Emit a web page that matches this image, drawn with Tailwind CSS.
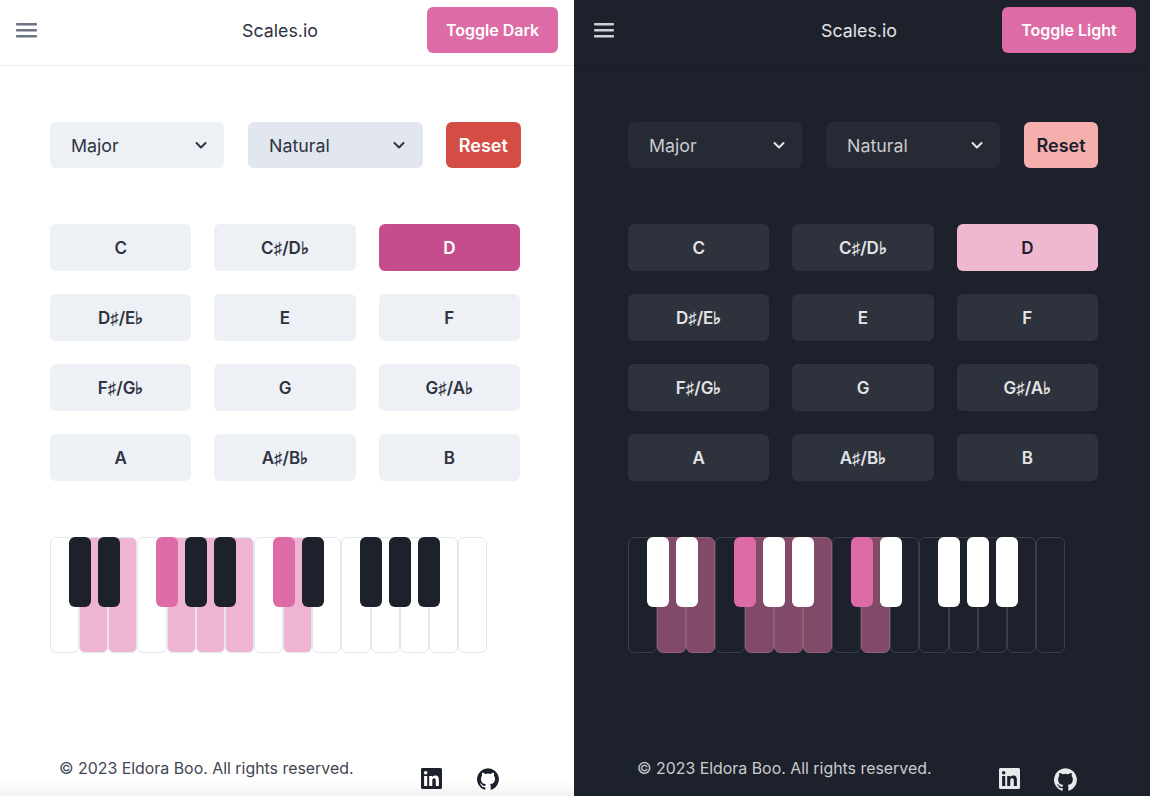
<!DOCTYPE html>
<html lang="en">
<head>
<meta charset="utf-8">
<title>Scales.io</title>
<script src="https://cdn.jsdelivr.net/npm/@tailwindcss/browser@4"></script>
</head>
<body class="m-0 overflow-hidden font-['Inter',sans-serif]">
<div class="flex h-[796px] w-[1150px]">

<!-- LIGHT -->
<section class="relative flex h-full w-[574px] shrink-0 flex-col bg-white text-[#2d3340]">
  <div class="absolute right-0 bottom-0 left-0 h-[16px] bg-gradient-to-b from-white to-[#f2f2f2]"></div>
  <header class="flex h-[66px] items-center border-b border-[#e9eef4] pr-4 pl-4">
    <svg class="mt-[-5px] h-[15px] w-[21px] shrink-0" viewBox="0 0 21 15" fill="#6b7484"><rect y="0" width="21" height="2.5" rx=".8"/><rect y="6" width="21" height="2.5" rx=".8"/><rect y="12" width="21" height="2.5" rx=".8"/></svg>
    <span class="mt-[-4px] ml-[205px] text-[17.8px] leading-[24px]">Scales.io</span>
    <button class="mt-[-6px] ml-auto h-[46px] w-[131px] rounded-md bg-[#dd6ba5] text-[16px] font-semibold text-white">Toggle Dark</button>
  </header>
  <div class="mt-[56px] flex pl-[50px]">
    <div class="flex h-[46px] w-[174px] items-center justify-between rounded-md bg-[#edf0f5] pr-[17px] pl-[21px] text-[17.8px]"><span class="mt-[2px]">Major</span><svg class="h-[10px] w-3" viewBox="0 0 12 10" fill="none" stroke="#2d3340" stroke-width="2" stroke-linecap="round" stroke-linejoin="round"><path d="M1.5 3 6 7.5 10.5 3"/></svg></div>
    <div class="ml-[24px] flex h-[46px] w-[175px] items-center justify-between rounded-md bg-[#e2e6ee] pr-[18px] pl-[21px] text-[17.8px]"><span class="mt-[2px]">Natural</span><svg class="h-[10px] w-3" viewBox="0 0 12 10" fill="none" stroke="#2d3340" stroke-width="2" stroke-linecap="round" stroke-linejoin="round"><path d="M1.5 3 6 7.5 10.5 3"/></svg></div>
    <button class="ml-[23px] h-[46px] w-[74.5px] rounded-md bg-[#d44d45] text-[18px] font-semibold text-white">Reset</button>
  </div>
  <div class="mt-[56px] grid w-[520px] grid-cols-3 gap-x-[23px] gap-y-[23px] pl-[50px] text-[17px] font-semibold">
    <button class="h-[47px] rounded-md bg-[#edf0f5] pt-[2px]">C</button>
    <button class="h-[47px] rounded-md bg-[#edf0f5] pt-[2px]">C♯/D♭</button>
    <button class="h-[47px] rounded-md bg-[#c64d8b] pt-[2px] text-white">D</button>
    <button class="h-[47px] rounded-md bg-[#edf0f5] pt-[2px]">D♯/E♭</button>
    <button class="h-[47px] rounded-md bg-[#edf0f5] pt-[2px]">E</button>
    <button class="h-[47px] rounded-md bg-[#edf0f5] pt-[2px]">F</button>
    <button class="h-[47px] rounded-md bg-[#edf0f5] pt-[2px]">F♯/G♭</button>
    <button class="h-[47px] rounded-md bg-[#edf0f5] pt-[2px]">G</button>
    <button class="h-[47px] rounded-md bg-[#edf0f5] pt-[2px]">G♯/A♭</button>
    <button class="h-[47px] rounded-md bg-[#edf0f5] pt-[2px]">A</button>
    <button class="h-[47px] rounded-md bg-[#edf0f5] pt-[2px]">A♯/B♭</button>
    <button class="h-[47px] rounded-md bg-[#edf0f5] pt-[2px]">B</button>
  </div>
  <div class="relative mt-[56px] ml-[50px] flex h-[116px] w-[437px]">
    <div class="flex-1 rounded-md border border-[#e2e6ee] bg-white"></div>
    <div class="flex-1 rounded-md border border-[#e2e6ee] bg-[#efb4d1]"></div>
    <div class="flex-1 rounded-md border border-[#e2e6ee] bg-[#efb4d1]"></div>
    <div class="flex-1 rounded-md border border-[#e2e6ee] bg-white"></div>
    <div class="flex-1 rounded-md border border-[#e2e6ee] bg-[#efb4d1]"></div>
    <div class="flex-1 rounded-md border border-[#e2e6ee] bg-[#efb4d1]"></div>
    <div class="flex-1 rounded-md border border-[#e2e6ee] bg-[#efb4d1]"></div>
    <div class="flex-1 rounded-md border border-[#e2e6ee] bg-white"></div>
    <div class="flex-1 rounded-md border border-[#e2e6ee] bg-[#efb4d1]"></div>
    <div class="flex-1 rounded-md border border-[#e2e6ee] bg-white"></div>
    <div class="flex-1 rounded-md border border-[#e2e6ee] bg-white"></div>
    <div class="flex-1 rounded-md border border-[#e2e6ee] bg-white"></div>
    <div class="flex-1 rounded-md border border-[#e2e6ee] bg-white"></div>
    <div class="flex-1 rounded-md border border-[#e2e6ee] bg-white"></div>
    <div class="flex-1 rounded-md border border-[#e2e6ee] bg-white"></div>
    <div class="absolute top-0 left-[19px] h-[70px] w-[22px] rounded-md bg-[#1c212c]"></div>
    <div class="absolute top-0 left-[48px] h-[70px] w-[22px] rounded-md bg-[#1c212c]"></div>
    <div class="absolute top-0 left-[106px] h-[70px] w-[22px] rounded-md bg-[#dd6ba5]"></div>
    <div class="absolute top-0 left-[135px] h-[70px] w-[22px] rounded-md bg-[#1c212c]"></div>
    <div class="absolute top-0 left-[164px] h-[70px] w-[22px] rounded-md bg-[#1c212c]"></div>
    <div class="absolute top-0 left-[223px] h-[70px] w-[22px] rounded-md bg-[#dd6ba5]"></div>
    <div class="absolute top-0 left-[252px] h-[70px] w-[22px] rounded-md bg-[#1c212c]"></div>
    <div class="absolute top-0 left-[310px] h-[70px] w-[22px] rounded-md bg-[#1c212c]"></div>
    <div class="absolute top-0 left-[339px] h-[70px] w-[22px] rounded-md bg-[#1c212c]"></div>
    <div class="absolute top-0 left-[368px] h-[70px] w-[22px] rounded-md bg-[#1c212c]"></div>
  </div>
  <footer class="relative mt-[104px] flex items-start pl-[59px] text-[15.9px] leading-[24px] text-[#3f4552]">
    <span>© 2023 Eldora Boo. All rights reserved.</span>
    <svg class="mt-[11px] ml-[67px] h-[21px] w-[21px]" viewBox="0 0 24 24" fill="#1c212c"><path d="M20.45 20.45h-3.55v-5.57c0-1.33-.03-3.04-1.85-3.04-1.85 0-2.14 1.45-2.14 2.94v5.67H9.35V9h3.41v1.56h.05c.48-.9 1.64-1.85 3.37-1.85 3.6 0 4.27 2.37 4.27 5.46v6.28zM5.34 7.43a2.06 2.06 0 1 1 0-4.12 2.06 2.06 0 0 1 0 4.12zM7.12 20.45H3.56V9h3.56v11.45zM22.22 0H1.77C.79 0 0 .77 0 1.73v20.54C0 23.23.79 24 1.77 24h20.45c.98 0 1.78-.77 1.78-1.73V1.73C24 .77 23.2 0 22.22 0z"/></svg>
    <svg class="mt-[11px] ml-[35px] h-[22px] w-[22px]" viewBox="0 0 24 24" fill="#1c212c"><path d="M12 .3a12 12 0 0 0-3.8 23.38c.6.12.83-.26.83-.57l-.01-2.24c-3.34.72-4.04-1.42-4.04-1.42-.55-1.39-1.33-1.76-1.33-1.76-1.09-.74.08-.73.08-.73 1.2.09 1.84 1.24 1.84 1.24 1.07 1.83 2.81 1.3 3.49 1 .11-.78.42-1.31.76-1.61-2.67-.3-5.47-1.33-5.47-5.93 0-1.31.47-2.38 1.24-3.22-.14-.3-.54-1.52.1-3.18 0 0 1-.32 3.3 1.23a11.5 11.5 0 0 1 6 0c2.28-1.55 3.29-1.23 3.29-1.23.64 1.66.24 2.88.12 3.18a4.65 4.65 0 0 1 1.23 3.22c0 4.61-2.8 5.63-5.48 5.92.42.36.81 1.1.81 2.22l-.01 3.29c0 .31.2.69.82.57A12 12 0 0 0 12 .3"/></svg>
  </footer>
</section>

<!-- DARK -->
<section class="relative flex h-full w-[576px] shrink-0 flex-col bg-[#1c212c] text-[#e3e4e6]">
  <header class="flex h-[66px] items-center border-b border-[#181c26] pr-[14px] pl-[20px]">
    <svg class="mt-[-5px] h-[15px] w-[20px] shrink-0" viewBox="0 0 20 15" fill="#cfd1d4"><rect y="0" width="20" height="2.5" rx=".8"/><rect y="6" width="20" height="2.5" rx=".8"/><rect y="12" width="20" height="2.5" rx=".8"/></svg>
    <span class="mt-[-4px] ml-[207px] text-[17.8px] leading-[24px]">Scales.io</span>
    <button class="mt-[-6px] ml-auto h-[46px] w-[134px] rounded-md bg-[#dd6ba5] text-[16px] font-semibold text-white">Toggle Light</button>
  </header>
  <div class="mt-[56px] flex pl-[54px]">
    <div class="flex h-[46px] w-[174px] items-center justify-between rounded-md bg-[#252a35] pr-[17px] pl-[21px] text-[17.8px] text-[#c9cbcf]"><span class="mt-[2px]">Major</span><svg class="h-[10px] w-3" viewBox="0 0 12 10" fill="none" stroke="#e3e4e6" stroke-width="2" stroke-linecap="round" stroke-linejoin="round"><path d="M1.5 3 6 7.5 10.5 3"/></svg></div>
    <div class="ml-[24px] flex h-[46px] w-[174px] items-center justify-between rounded-md bg-[#252a35] pr-[17px] pl-[21px] text-[17.8px] text-[#c9cbcf]"><span class="mt-[2px]">Natural</span><svg class="h-[10px] w-3" viewBox="0 0 12 10" fill="none" stroke="#e3e4e6" stroke-width="2" stroke-linecap="round" stroke-linejoin="round"><path d="M1.5 3 6 7.5 10.5 3"/></svg></div>
    <button class="ml-[24px] h-[46px] w-[74px] rounded-md bg-[#f5b0ae] text-[18px] font-semibold text-[#1c212c]">Reset</button>
  </div>
  <div class="mt-[56px] grid w-[524px] grid-cols-3 gap-x-[23px] gap-y-[23px] pl-[54px] text-[17px] font-semibold">
    <button class="h-[47px] rounded-md bg-[#2e323d] pt-[2px]">C</button>
    <button class="h-[47px] rounded-md bg-[#2e323d] pt-[2px]">C♯/D♭</button>
    <button class="h-[47px] rounded-md bg-[#f0b8d0] pt-[2px] text-[#1c212c]">D</button>
    <button class="h-[47px] rounded-md bg-[#2e323d] pt-[2px]">D♯/E♭</button>
    <button class="h-[47px] rounded-md bg-[#2e323d] pt-[2px]">E</button>
    <button class="h-[47px] rounded-md bg-[#2e323d] pt-[2px]">F</button>
    <button class="h-[47px] rounded-md bg-[#2e323d] pt-[2px]">F♯/G♭</button>
    <button class="h-[47px] rounded-md bg-[#2e323d] pt-[2px]">G</button>
    <button class="h-[47px] rounded-md bg-[#2e323d] pt-[2px]">G♯/A♭</button>
    <button class="h-[47px] rounded-md bg-[#2e323d] pt-[2px]">A</button>
    <button class="h-[47px] rounded-md bg-[#2e323d] pt-[2px]">A♯/B♭</button>
    <button class="h-[47px] rounded-md bg-[#2e323d] pt-[2px]">B</button>
  </div>
  <div class="relative mt-[56px] ml-[54px] flex h-[116px] w-[437px]">
    <div class="flex-1 rounded-md border border-[#3a3f4a]"></div>
    <div class="flex-1 rounded-md border border-[#8f6079] bg-[#824a69]"></div>
    <div class="flex-1 rounded-md border border-[#8f6079] bg-[#824a69]"></div>
    <div class="flex-1 rounded-md border border-[#3a3f4a]"></div>
    <div class="flex-1 rounded-md border border-[#8f6079] bg-[#824a69]"></div>
    <div class="flex-1 rounded-md border border-[#8f6079] bg-[#824a69]"></div>
    <div class="flex-1 rounded-md border border-[#8f6079] bg-[#824a69]"></div>
    <div class="flex-1 rounded-md border border-[#3a3f4a]"></div>
    <div class="flex-1 rounded-md border border-[#8f6079] bg-[#824a69]"></div>
    <div class="flex-1 rounded-md border border-[#3a3f4a]"></div>
    <div class="flex-1 rounded-md border border-[#3a3f4a]"></div>
    <div class="flex-1 rounded-md border border-[#3a3f4a]"></div>
    <div class="flex-1 rounded-md border border-[#3a3f4a]"></div>
    <div class="flex-1 rounded-md border border-[#3a3f4a]"></div>
    <div class="flex-1 rounded-md border border-[#3a3f4a]"></div>
    <div class="absolute top-0 left-[19px] h-[70px] w-[22px] rounded-md bg-white"></div>
    <div class="absolute top-0 left-[48px] h-[70px] w-[22px] rounded-md bg-white"></div>
    <div class="absolute top-0 left-[106px] h-[70px] w-[22px] rounded-md bg-[#dd6ba5]"></div>
    <div class="absolute top-0 left-[135px] h-[70px] w-[22px] rounded-md bg-white"></div>
    <div class="absolute top-0 left-[164px] h-[70px] w-[22px] rounded-md bg-white"></div>
    <div class="absolute top-0 left-[223px] h-[70px] w-[22px] rounded-md bg-[#dd6ba5]"></div>
    <div class="absolute top-0 left-[252px] h-[70px] w-[22px] rounded-md bg-white"></div>
    <div class="absolute top-0 left-[310px] h-[70px] w-[22px] rounded-md bg-white"></div>
    <div class="absolute top-0 left-[339px] h-[70px] w-[22px] rounded-md bg-white"></div>
    <div class="absolute top-0 left-[368px] h-[70px] w-[22px] rounded-md bg-white"></div>
  </div>
  <footer class="mt-[104px] flex items-start pl-[63px] text-[15.9px] leading-[24px] text-[#c9cbcf]">
    <span>© 2023 Eldora Boo. All rights reserved.</span>
    <svg class="mt-[11px] ml-[67px] h-[21px] w-[21px]" viewBox="0 0 24 24" fill="#e8e9ea"><path d="M20.45 20.45h-3.55v-5.57c0-1.33-.03-3.04-1.85-3.04-1.85 0-2.14 1.45-2.14 2.94v5.67H9.35V9h3.41v1.56h.05c.48-.9 1.64-1.85 3.37-1.85 3.6 0 4.27 2.37 4.27 5.46v6.28zM5.34 7.43a2.06 2.06 0 1 1 0-4.12 2.06 2.06 0 0 1 0 4.12zM7.12 20.45H3.56V9h3.56v11.45zM22.22 0H1.77C.79 0 0 .77 0 1.73v20.54C0 23.23.79 24 1.77 24h20.45c.98 0 1.78-.77 1.78-1.73V1.73C24 .77 23.2 0 22.22 0z"/></svg>
    <svg class="mt-[11px] ml-[34px] h-[23px] w-[23px]" viewBox="0 0 24 24" fill="#e8e9ea"><path d="M12 .3a12 12 0 0 0-3.8 23.38c.6.12.83-.26.83-.57l-.01-2.24c-3.34.72-4.04-1.42-4.04-1.42-.55-1.39-1.33-1.76-1.33-1.76-1.09-.74.08-.73.08-.73 1.2.09 1.84 1.24 1.84 1.24 1.07 1.83 2.81 1.3 3.49 1 .11-.78.42-1.31.76-1.61-2.67-.3-5.47-1.33-5.47-5.93 0-1.31.47-2.38 1.24-3.22-.14-.3-.54-1.52.1-3.18 0 0 1-.32 3.3 1.23a11.5 11.5 0 0 1 6 0c2.28-1.55 3.29-1.23 3.29-1.23.64 1.66.24 2.88.12 3.18a4.65 4.65 0 0 1 1.23 3.22c0 4.61-2.8 5.63-5.48 5.92.42.36.81 1.1.81 2.22l-.01 3.29c0 .31.2.69.82.57A12 12 0 0 0 12 .3"/></svg>
  </footer>
</section>
</div>
</body>
</html>
